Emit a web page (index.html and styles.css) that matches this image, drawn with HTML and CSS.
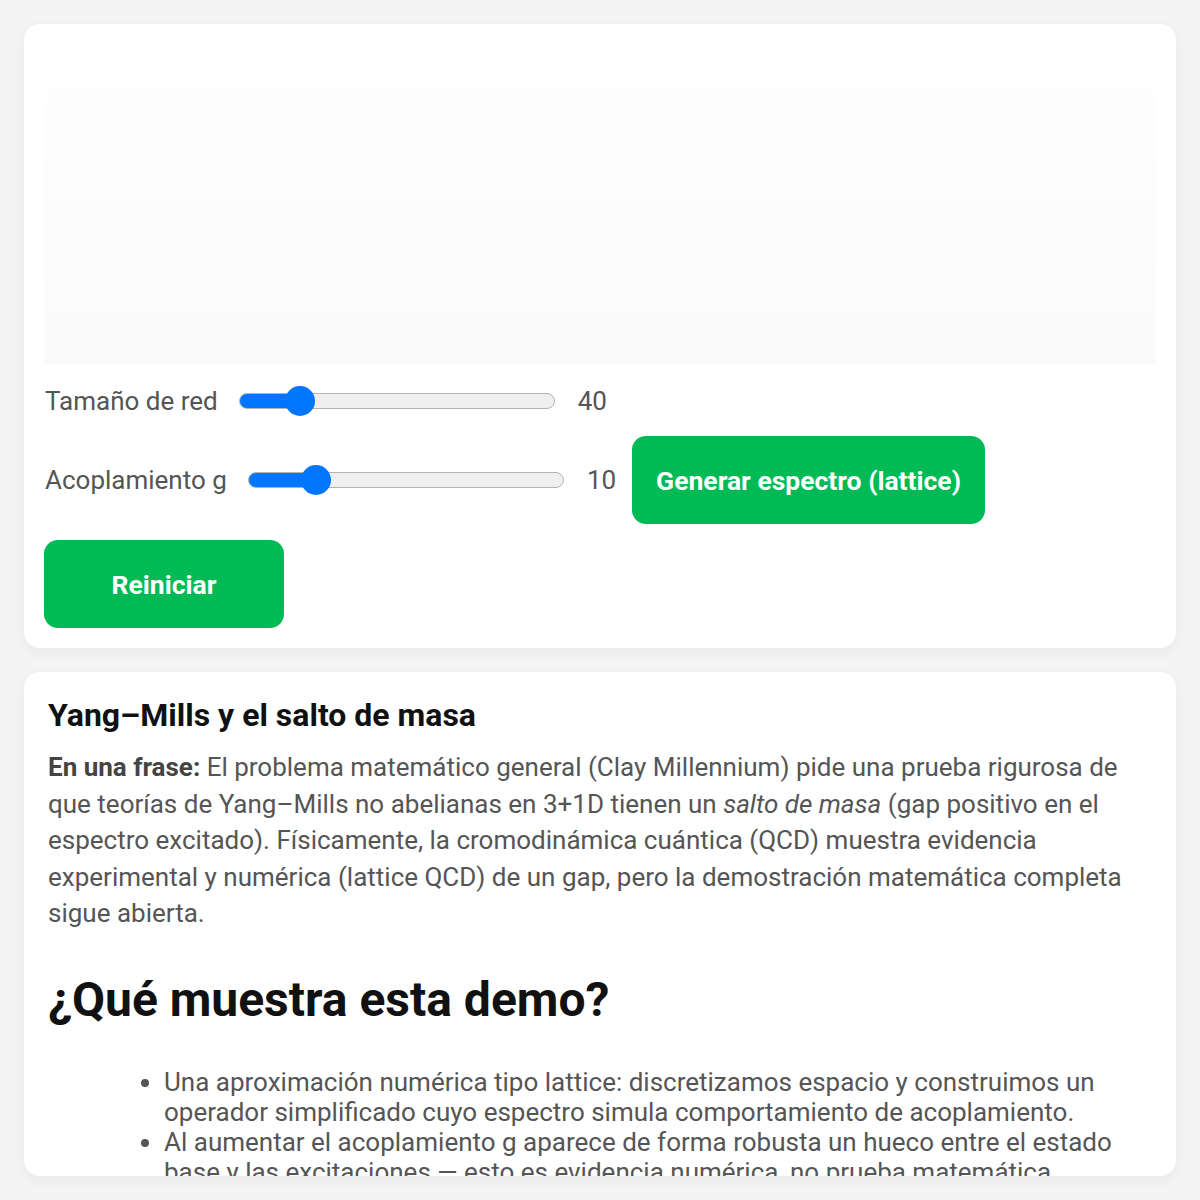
FILE: index.html
```html
<!DOCTYPE html>
<html lang="es">
<head>
  <meta charset="UTF-8">
  <meta name="viewport" content="width=device-width, initial-scale=1.0">
  <title>Yang–Mills: salto de masa</title>
  <link rel="stylesheet" href="styles.css">
</head>
<body>

  <div class="card" id="demo">
    <div class="canvas" id="spectrum"></div>

    <div class="controls">
      <div class="row row-first">
        <label for="latticeSize">Tamaño de red</label>
        <input type="range" id="latticeSize" min="10" max="200" value="40" style="--fill: 21%;">
        <span class="value" id="sizeValue">40</span>
      </div>
      <div class="row">
        <label for="coupling">Acoplamiento g</label>
        <input type="range" id="coupling" min="1" max="50" value="10" style="--fill: 23%;">
        <span class="value" id="couplingValue">10</span>
        <button class="btn btn-generate">Generar espectro (lattice)</button>
      </div>
      <div class="row">
        <button class="btn">Reiniciar</button>
      </div>
    </div>
  </div>

  <div class="card info">
    <h3>Yang–Mills y el salto de masa</h3>
    <p><strong>En una frase:</strong> El problema matemático general (Clay Millennium) pide una prueba rigurosa de que teorías de Yang–Mills no abelianas en 3+1D tienen un <em>salto de masa</em> (gap positivo en el espectro excitado). Físicamente, la cromodinámica cuántica (QCD) muestra evidencia experimental y numérica (lattice QCD) de un gap, pero la demostración matemática completa sigue abierta.</p>

    <h2>¿Qué muestra esta demo?</h2>
    <ul>
      <li>Una aproximación numérica tipo lattice: discretizamos espacio y construimos un operador simplificado cuyo espectro simula comportamiento de acoplamiento.</li>
      <li>Al aumentar el acoplamiento g aparece de forma robusta un hueco entre el estado base y las excitaciones — esto es evidencia numérica, no prueba matemática.</li>
    </ul>
  </div>

</body>
</html>
```

FILE: styles.css
```css
body {
  margin: 0;
  padding: 24px;
  background-color: #f4f4f4;
  font-family: Roboto, "Noto Sans", sans-serif;
  color: #555;
}
.card {
  background-color: #ffffff;
  border-radius: 16px;
  box-shadow: 0 4px 14px rgba(0, 0, 0, 0.05);
  padding: 20px;
}
.canvas {
  height: 284px;
  margin-top: 36px;
  margin-bottom: 20px;
  background: linear-gradient(#fefefe, #fafafa);
}
.controls {
  display: flex;
  flex-direction: column;
  gap: 16px;
}
.row {
  display: flex;
  align-items: center;
  gap: 22px;
}
.row-first {
  min-height: 34px;
  margin-bottom: 2px;
}
label, .value {
  font-size: 26px;
  color: #555;
  padding-left: 1px;
}
input[type="range"] {
  -webkit-appearance: none;
  appearance: none;
  width: 316px;
  height: 16px;
  margin: 0 0 0 -1px;
  border: 1px solid #b3b3b3;
  border-radius: 8px;
  box-sizing: border-box;
  background: linear-gradient(to right, #0075ff var(--fill), #efefef var(--fill));
}
input[type="range"]::-webkit-slider-thumb {
  -webkit-appearance: none;
  width: 30px;
  height: 30px;
  border-radius: 50%;
  background-color: #0075ff;
  border: none;
}
.btn {
  min-width: 240px;
  height: 88px;
  padding: 0 24px;
  background-color: #00bb55;
  color: white;
  border: none;
  border-radius: 14px;
  font-family: Roboto, sans-serif;
  font-size: 26.5px;
  font-weight: bold;
  cursor: pointer;
}
.btn-generate {
  margin-left: -6px;
}
.info {
  margin-top: 24px;
  height: 504px;
  box-sizing: border-box;
  padding: 24px;
  overflow: hidden;
}
.info h3 {
  margin: 0;
  font-size: 32px;
  line-height: 38px;
  color: #111;
}
.info p {
  margin: 15px 0 0;
  font-size: 26px;
  line-height: 36.5px;
}
.info p strong {
  color: #444;
}
.info h2 {
  margin: 40px 0 0;
  font-size: 48px;
  line-height: 56px;
  color: #111;
}
.info ul {
  margin: 39px 0 0;
  padding-left: 116px;
  font-size: 26px;
  line-height: 30px;
}
```
